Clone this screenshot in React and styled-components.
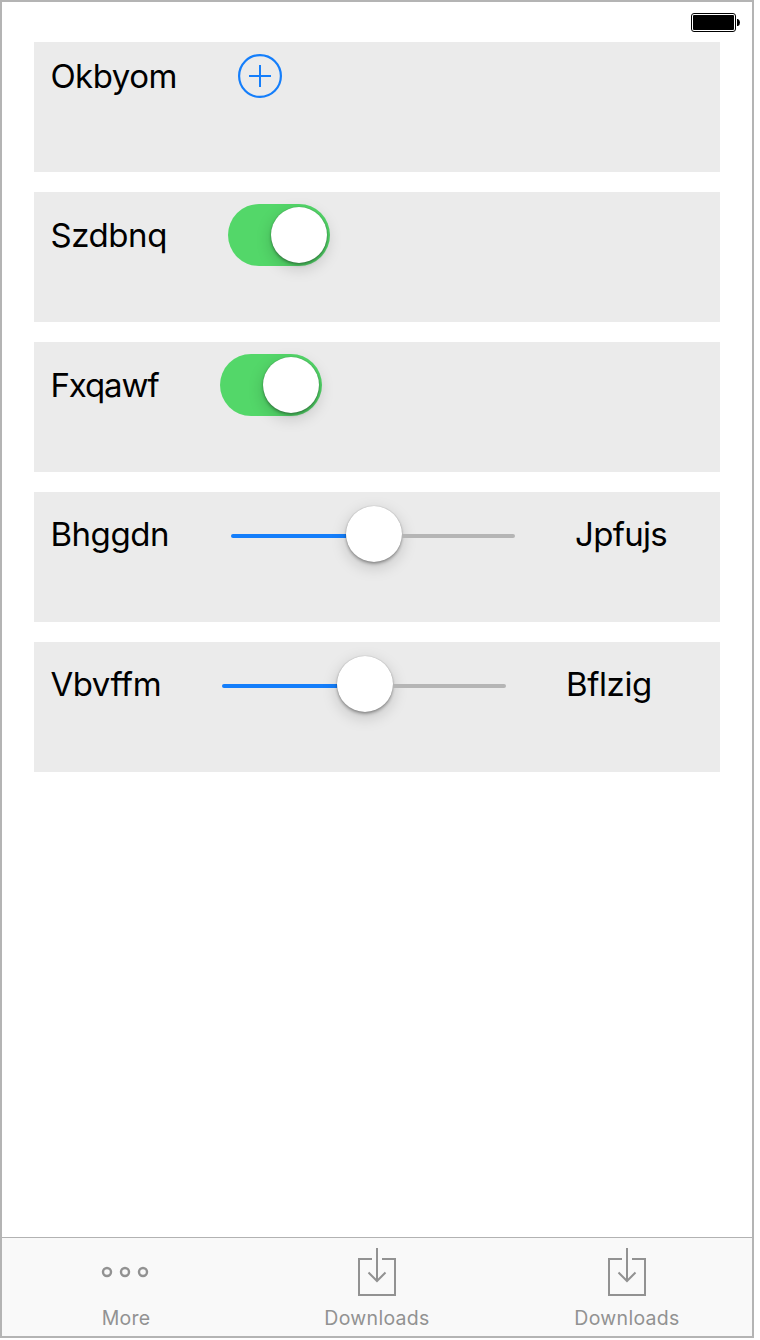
import React from "react";
import styled, { createGlobalStyle } from "styled-components";

const GlobalStyle = createGlobalStyle`
  *, *::before, *::after { box-sizing: border-box; }
  body { margin: 0; background: #fff; font-family: Inter, "Liberation Sans", sans-serif; }
`;

const Screen = styled.div`
  display: flex;
  flex-direction: column;
  width: 754px;
  height: 1338px;
  border: 2px solid #b4b4b4;
  background: #fff;
`;

const StatusBar = styled.header`
  display: flex;
  justify-content: flex-end;
  height: 40px;
  padding: 11px 12px 0 0;
`;

const List = styled.main`
  flex: 1;
  display: flex;
  flex-direction: column;
  gap: 20px;
  padding: 0 32px;
`;

const Row = styled.section`
  display: flex;
  align-items: flex-start;
  height: 130px;
  padding: 12px 16px;
  background: #ebebeb;
`;

const Label = styled.span`
  flex: none;
  width: ${(p) => p.$width}px;
  margin-top: ${(p) => p.$top}px;
  padding-left: ${(p) => p.$indent ?? 0.4}px;
  color: #000;
  font-size: 33px;
  line-height: 40px;
  letter-spacing: ${(p) => p.$tracking || 0}px;
  white-space: nowrap;
`;

const AddButton = styled.button`
  display: block;
  width: 44px;
  height: 44px;
  padding: 0;
  border: 0;
  background: none;
  color: #147efb;
`;

const SwitchTrack = styled.button`
  display: flex;
  justify-content: flex-end;
  width: 102px;
  height: 62px;
  padding: 3px;
  border: 0;
  border-radius: 31px;
  background: #53d769;
`;

const Knob = styled.span`
  flex: none;
  width: 56px;
  height: 56px;
  border-radius: 50%;
  background: #fff;
  box-shadow: 0 0 1px rgba(0, 0, 0, 0.3), 0 2px 3px rgba(0, 0, 0, 0.3),
    0 5px 16px rgba(0, 0, 0, 0.18);
`;

const SliderBox = styled.div`
  display: flex;
  align-items: center;
  width: 284px;
  height: 60px;
  margin-right: 60px;
`;

const Track = styled.span`
  flex: none;
  width: ${(p) => (p.$filled ? 115 : 113)}px;
  height: 4px;
  margin-top: 4px;
  border-radius: ${(p) => (p.$filled ? "2px 0 0 2px" : "0 2px 2px 0")};
  background: ${(p) => (p.$filled ? "#147efb" : "#b5b5b5")};
`;

const TabBar = styled.nav`
  display: grid;
  grid-template-columns: 246px 258px 242px;
  height: 99px;
  border-top: 1px solid #b2b2b2;
  background: #f9f9f9;
`;

const Tab = styled.a`
  display: flex;
  flex-direction: column;
  align-items: center;
  padding-top: 10px;
  color: #929292;
`;

const TabLabel = styled.span`
  margin-top: 10px;
  padding-left: ${(p) => p.$indent || 0}px;
  font-size: 19.5px;
  line-height: 24px;
  letter-spacing: ${(p) => p.$tracking}px;
`;

const Battery = () => (
  <svg width="49" height="19" viewBox="0 0 49 19">
    <rect x="0.5" y="0.5" width="44" height="18" rx="2.5" fill="#fff" stroke="#000" />
    <rect x="2" y="2" width="41" height="15" rx="1" />
    <path d="M46 6h1q2 1 2 3.5T47 13h-1z" />
  </svg>
);

const Plus = () => (
  <svg width="44" height="44" viewBox="0 0 44 44" fill="none" stroke="currentColor" strokeWidth="2">
    <circle cx="22" cy="22" r="20.9" strokeWidth="2.2" />
    <path d="M11 22h22M22 11v22" />
  </svg>
);

const MoreIcon = () => (
  <svg width="48" height="48" viewBox="0 0 48 48" fill="none" stroke="currentColor" strokeWidth="2.4">
    <circle cx="6" cy="24" r="4" />
    <circle cx="24" cy="24" r="4" />
    <circle cx="42" cy="24" r="4" />
  </svg>
);

const DownloadIcon = () => (
  <svg width="38" height="48" viewBox="0 0 38 48" fill="none" stroke="currentColor" strokeWidth="2">
    <path d="M14 11H1v36h36V11H24M19 0v33M10.5 24.5l8.5 8.5 8.5-8.5" />
  </svg>
);

const Switch = () => (
  <SwitchTrack role="switch" aria-checked="true">
    <Knob />
  </SwitchTrack>
);

const Slider = () => (
  <SliderBox>
    <Track $filled />
    <Knob />
    <Track />
  </SliderBox>
);

export default function App() {
  return (
    <>
      <GlobalStyle />
      <Screen>
        <StatusBar><Battery /></StatusBar>
        <List>
          <Row>
            <Label $width={188} $top={2} $tracking={-0.5}>Okbyom</Label>
            <AddButton aria-label="Add"><Plus /></AddButton>
          </Row>
          <Row>
            <Label $width={178} $top={11} $tracking={-0.4}>Szdbnq</Label>
            <Switch />
          </Row>
          <Row>
            <Label $width={170} $top={11} $tracking={-1.1}>Fxqawf</Label>
            <Switch />
          </Row>
          <Row>
            <Label $width={181} $top={10} $tracking={-0.45}>Bhggdn</Label>
            <Slider />
            <Label $width={96} $top={10} $indent={0} $tracking={-0.7}>Jpfujs</Label>
          </Row>
          <Row>
            <Label $width={172} $top={10} $tracking={-0.45}>Vbvffm</Label>
            <Slider />
            <Label $width={96} $top={10} $indent={0} $tracking={-0.4}>Bflzig</Label>
          </Row>
        </List>
        <TabBar>
          <Tab><MoreIcon /><TabLabel $tracking={0.2} $indent={2}>More</TabLabel></Tab>
          <Tab><DownloadIcon /><TabLabel $tracking={0.3}>Downloads</TabLabel></Tab>
          <Tab><DownloadIcon /><TabLabel $tracking={0.3}>Downloads</TabLabel></Tab>
        </TabBar>
      </Screen>
    </>
  );
}
